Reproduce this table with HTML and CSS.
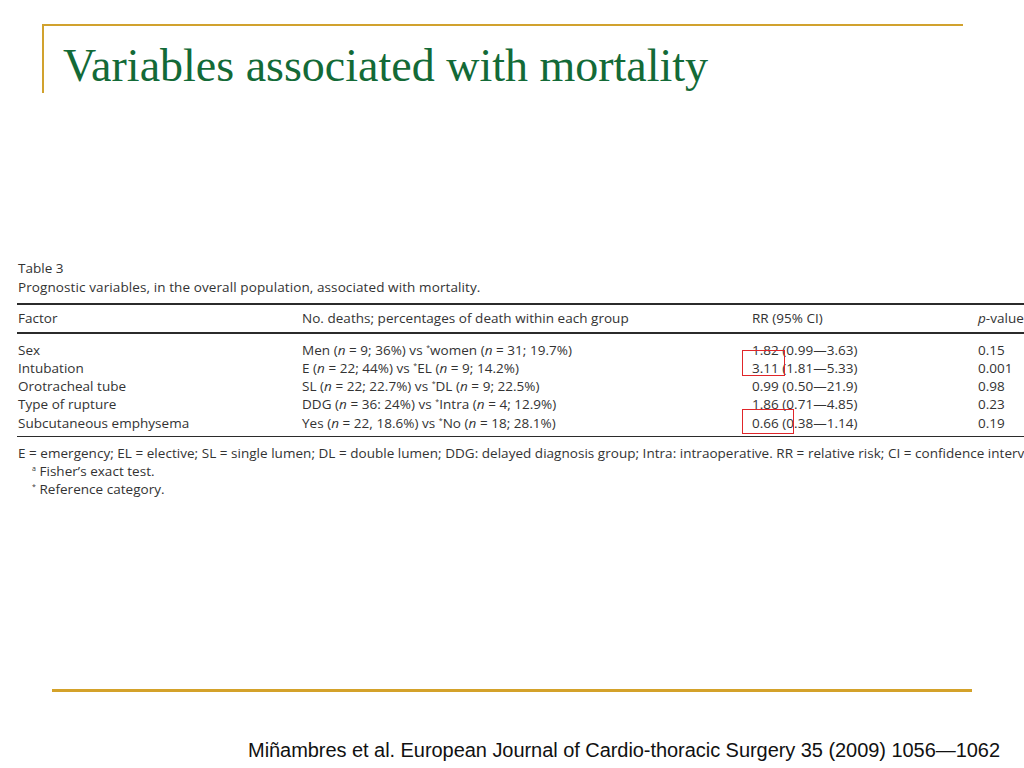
FILE: index.html
```html
<!DOCTYPE html>
<html>
<head>
<meta charset="utf-8">
<link rel="stylesheet" href="styles.css">
</head>
<body>
<div class="slide">
  <header class="head">
    <h1 class="title">Variables associated with mortality</h1>
  </header>
  <section class="tbl">
    <div class="t-label">Table 3</div>
    <div class="t-caption">Prognostic variables, in the overall population, associated with mortality.</div>
    <div class="rule thick"></div>
    <div class="row hdr">
      <span class="c1">Factor</span>
      <span class="c2">No. deaths; percentages of death within each group</span>
      <span class="c3">RR (95% CI)</span>
      <span class="c4"><i>p</i>-value</span>
    </div>
    <div class="rule"></div>
    <div class="body">
      <div class="row">
        <span class="c1">Sex</span>
        <span class="c2">Men (<i>n</i> = 9; 36%) vs <sup>*</sup>women (<i>n</i> = 31; 19.7%)</span>
        <span class="c3">1.82 (0.99—3.63)</span>
        <span class="c4">0.15</span>
      </div>
      <div class="row">
        <span class="c1">Intubation</span>
        <span class="c2">E (<i>n</i> = 22; 44%) vs <sup>*</sup>EL (<i>n</i> = 9; 14.2%)</span>
        <span class="c3"><span class="mark m1"></span>3.11 (1.81—5.33)</span>
        <span class="c4">0.001</span>
      </div>
      <div class="row">
        <span class="c1">Orotracheal tube</span>
        <span class="c2">SL (<i>n</i> = 22; 22.7%) vs <sup>*</sup>DL (<i>n</i> = 9; 22.5%)</span>
        <span class="c3">0.99 (0.50—21.9)</span>
        <span class="c4">0.98</span>
      </div>
      <div class="row">
        <span class="c1">Type of rupture</span>
        <span class="c2">DDG (<i>n</i> = 36: 24%) vs <sup>*</sup>Intra (<i>n</i> = 4; 12.9%)</span>
        <span class="c3">1.86 (0.71—4.85)</span>
        <span class="c4">0.23</span>
      </div>
      <div class="row">
        <span class="c1">Subcutaneous emphysema</span>
        <span class="c2">Yes (<i>n</i> = 22, 18.6%) vs <sup>*</sup>No (<i>n</i> = 18; 28.1%)</span>
        <span class="c3"><span class="mark m2"></span>0.66 (0.38—1.14)</span>
        <span class="c4">0.19</span>
      </div>
    </div>
    <div class="rule"></div>
    <div class="notes">
      <div class="note">E = emergency; EL = elective; SL = single lumen; DL = double lumen; DDG: delayed diagnosis group; Intra: intraoperative. RR = relative risk; CI = confidence interval.</div>
      <div class="note ind"><sup>a</sup> Fisher’s exact test.</div>
      <div class="note ind"><sup>*</sup> Reference category.</div>
    </div>
  </section>
  <footer class="foot">
    <div class="foot-line"></div>
    <p class="cite">Miñambres et al. European Journal of Cardio-thoracic Surgery 35 (2009) 1056—1062</p>
  </footer>
</div>
</body>
</html>
```

FILE: styles.css
```css
html, body {
  margin: 0;
  padding: 0;
  background: #ffffff;
}
.slide {
  width: 1024px;
  height: 768px;
  overflow: hidden;
  position: relative;
  display: flex;
  flex-direction: column;
}
.head {
  margin: 24px 0 0 42px;
  width: 921px;
  height: 69px;
  border-top: 2px solid #d1a22e;
  border-left: 2px solid #d1a22e;
  box-sizing: border-box;
}
.title {
  margin: 0;
  padding-left: 19px;
  font-family: "Liberation Serif", serif;
  font-weight: normal;
  font-size: 46px;
  line-height: 52px;
  padding-top: 14px;
  color: #136a37;
  white-space: nowrap;
}
.tbl {
  margin-top: 166px;
  padding-left: 17px;
  width: 1100px;
  font-family: "Open Sans", sans-serif;
  font-size: 13.5px;
  letter-spacing: 0.03px;
  color: #333333;
}
.t-label, .t-caption {
  padding-left: 1px;
  line-height: 19px;
  white-space: nowrap;
}
.t-caption {
  margin-bottom: 6px;
  letter-spacing: 0.1px;
}
.rule {
  height: 1.5px;
  background: #2b2b2b;
}
.rule.thick {
  height: 2px;
}
.row {
  display: flex;
  line-height: 18.3px;
  white-space: nowrap;
}
.row.hdr {
  line-height: 27px;
}
.body {
  padding: 7px 0 4px;
}
.c1 { width: 284px; padding-left: 1px; }
.c2 { width: 450px; }
.c3 { width: 226px; position: relative; }
.c4 { width: 100px; }
sup {
  font-size: 7px;
  line-height: 0;
  vertical-align: 5px;
}
.mark {
  position: absolute;
  border: 1.5px solid #e0262a;
  box-sizing: border-box;
}
.m1 { left: -10px; top: -9px; width: 43px; height: 26px; }
.m2 { left: -10px; top: -5px; width: 52px; height: 25px; }
.notes {
  padding-top: 7px;
}
.note {
  line-height: 18px;
  white-space: nowrap;
  padding-left: 1px;
}
.note.ind {
  padding-left: 15px;
}
.foot {
  margin-top: auto;
}
.foot-line {
  margin-left: 52px;
  width: 920px;
  height: 3px;
  background: #d4a22a;
}
.cite {
  margin: 47px 24px 6px 0;
  text-align: right;
  font-family: "Liberation Sans", sans-serif;
  font-size: 20px;
  line-height: 23px;
  letter-spacing: -0.05px;
  color: #111;
}
```
